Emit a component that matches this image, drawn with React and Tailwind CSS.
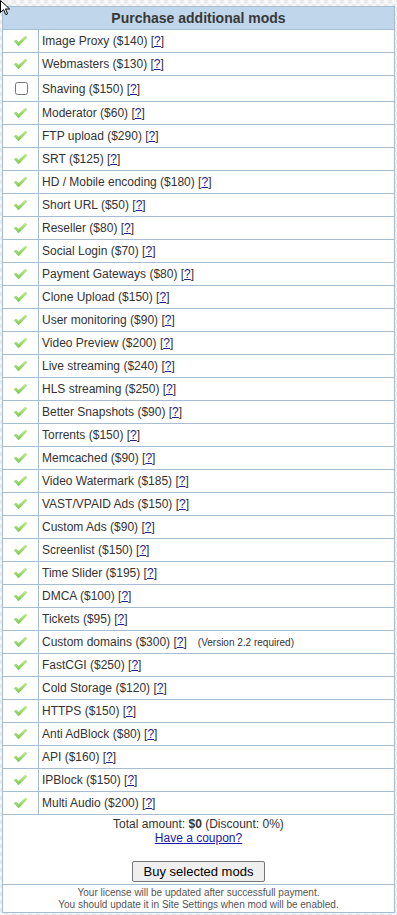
import React from 'react';

const mods = [
    ['Image Proxy', 140, true],
    ['Webmasters', 130, true],
    ['Shaving', 150, false],
    ['Moderator', 60, true],
    ['FTP upload', 290, true],
    ['SRT', 125, true],
    ['HD / Mobile encoding', 180, true],
    ['Short URL', 50, true],
    ['Reseller', 80, true],
    ['Social Login', 70, true],
    ['Payment Gateways', 80, true],
    ['Clone Upload', 150, true],
    ['User monitoring', 90, true],
    ['Video Preview', 200, true],
    ['Live streaming', 240, true],
    ['HLS streaming', 250, true],
    ['Better Snapshots', 90, true],
    ['Torrents', 150, true],
    ['Memcached', 90, true],
    ['Video Watermark', 185, true],
    ['VAST/VPAID Ads', 150, true],
    ['Custom Ads', 90, true],
    ['Screenlist', 150, true],
    ['Time Slider', 195, true],
    ['DMCA', 100, true],
    ['Tickets', 95, true],
    ['Custom domains', 300, true, '(Version 2.2 required)'],
    ['FastCGI', 250, true],
    ['Cold Storage', 120, true],
    ['HTTPS', 150, true],
    ['Anti AdBlock', 80, true],
    ['API', 160, true],
    ['IPBlock', 150, true],
    ['Multi Audio', 200, true],
];

function CheckIcon() {
    return (
        <svg width="15" height="12" viewBox="0 0 15 12">
            <defs>
                <linearGradient id="chk" x1="0" y1="0" x2="0" y2="1">
                    <stop offset="0" stopColor="#c6ec9a" />
                    <stop offset="1" stopColor="#78c84a" />
                </linearGradient>
            </defs>
            <path d="M0.8 6.2 L3 4.4 L5.6 7 L12.4 0.6 L14.4 2.4 L5.6 11.2 Z" fill="url(#chk)" />
        </svg>
    );
}

function Cursor() {
    return (
        <svg className="absolute left-0 top-0" width="12" height="16" viewBox="0 0 12 16">
            <path d="M0.5 0.5 L0.5 12.5 L3.5 9.6 L5.8 14.6 L7.6 13.8 L5.4 9 L9.6 9 Z" fill="#fff" stroke="#000" strokeWidth="1" strokeLinejoin="round" />
        </svg>
    );
}

function ModRow({ name, price, owned, note }) {
    return (
        <div className={`flex border-b border-[#a6bcd3] ${owned ? 'h-[23px]' : 'h-[26px]'}`}>
            <div className="w-[36px] shrink-0 border-r border-[#a6bcd3] flex items-center justify-center">
                {owned ? <CheckIcon /> : <input type="checkbox" className="w-[13px] h-[13px] m-0 ml-[1px]" />}
            </div>
            <div className="flex items-center pl-[3px] text-[12px] text-[#333]">
                <span>{name} (${price}) [<a href="#" className="text-[#1c1c8c] underline">?</a>]</span>
                {note && <span className="ml-[11px] text-[10px]">{note}</span>}
            </div>
        </div>
    );
}

export default function App() {
    return (
        <div className="relative min-h-[915px] px-[2px] pt-[6px] bg-[repeating-conic-gradient(#eaeaea_0_25%,#f7f7f7_0_50%)] bg-[length:8px_8px] font-['Liberation_Sans',Arial,sans-serif]">
            <div className="bg-white border border-[#a6bcd3]">
                <div className="h-[23px] flex items-center justify-center bg-[#c0d6eb] border-b border-[#a6bcd3] text-[14px] font-bold text-[#383838]">
                    Purchase additional mods
                </div>
                {mods.map(([name, price, owned, note]) => (
                    <ModRow key={name} name={name} price={price} owned={owned} note={note} />
                ))}
                <div className="flex flex-col items-center pt-[2px] pb-[2px] border-b border-[#a6bcd3] text-[12px] leading-[14px] text-[#333]">
                    <div>Total amount: <b>$0</b> (Discount: 0%)</div>
                    <a href="#" className="text-[#1a1aa8] underline">Have a coupon?</a>
                    <button className="mt-[16px] h-[21px] px-[11px] text-[13px] text-black bg-[#efefef] border border-[#767676] rounded-[2px]">
                        Buy selected mods
                    </button>
                </div>
                <div className="pt-[2px] pb-[1px] text-center text-[10px] leading-[12px] text-[#555]">
                    <div>Your license will be updated after successfull payment.</div>
                    <div>You should update it in Site Settings when mod will be enabled.</div>
                </div>
            </div>
            <Cursor />
        </div>
    );
}
